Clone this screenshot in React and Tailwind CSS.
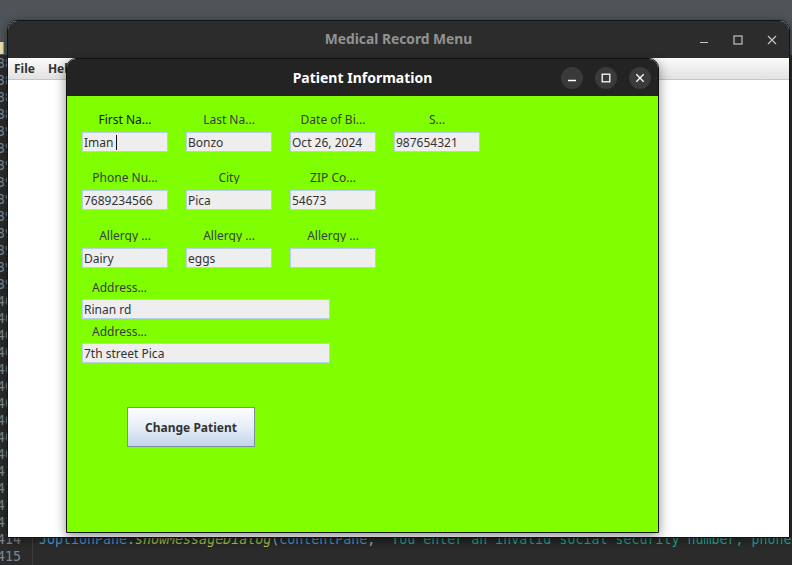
import React from "react";

const lineNums = [];
for (let n = 386; n <= 415; n++) lineNums.push(n);

function Label({ text, dark }) {
  return (
    <div className="h-[20px] flex items-center justify-center">
      <span
        className={`block h-[14px] overflow-hidden leading-[15px] text-[12px] whitespace-nowrap ${
          dark ? "text-[#151515]" : "text-[#3c3c3c]"
        }`}
      >
        {text}
      </span>
    </div>
  );
}

function Field({ value, caret, wide }) {
  return (
    <div
      className={`h-[20px] ${
        wide ? "w-[248px]" : "w-[86px]"
      } bg-[#eeeeee] border border-[#b8cfe5] text-[12px] text-[#333333] pl-[1px] pt-[1px] flex items-center leading-none whitespace-nowrap overflow-hidden`}
    >
      <span>{value}</span>
      {caret && <span className="w-[1px] h-[15px] bg-[#111] ml-[3px]" />}
    </div>
  );
}

function Cell({ label, value, dark, caret, empty }) {
  if (empty) return <div />;
  return (
    <div className="flex flex-col">
      <Label text={label} dark={dark} />
      <div className="mt-[3px]">
        <Field value={value} caret={caret} />
      </div>
    </div>
  );
}

export default function App() {
  const font = { fontFamily: '"Noto Sans", "DejaVu Sans", sans-serif' };
  return (
    <div
      className="relative w-[792px] h-[565px] overflow-hidden bg-[#4f5458] flex flex-col"
      style={font}
    >
      {/* desktop top area */}
      <div className="h-[55px] flex flex-col justify-end">
        <div className="w-[4px] h-[12px] bg-[#efe3b0] border-r border-[#c9a94a] mb-[1px]" />
      </div>

      {/* editor behind */}
      <div
        className="flex-1 bg-[#2b2b2b] flex"
        style={{ fontFamily: '"DejaVu Sans Mono", "Liberation Mono", monospace' }}
      >
        <div className="w-[33px] border-r border-[#3d3d3d] flex flex-col items-end pr-[11px] text-[13.3px] leading-[17px] text-[#7b8792]">
          {lineNums.map((n) => (
            <div key={n} className="h-[17px]">
              {n}
            </div>
          ))}
        </div>
        <div className="flex-1 flex flex-col pl-[6px] text-[13.3px] leading-[17px] whitespace-nowrap overflow-hidden">
          {lineNums.map((n) => (
            <div key={n} className="h-[17px]">
              {n === 414 ? (
                <>
                  <span className="text-[#4a9bd6]">JOptionPane</span>
                  <span className="text-[#b0b0b0]">.</span>
                  <span className="text-[#a9c84a] italic">showMessageDialog</span>
                  <span className="text-[#b0b0b0]">(</span>
                  <span className="text-[#4a9bd6]">contentPane</span>
                  <span className="text-[#b0b0b0]">, </span>
                  <span className="text-[#22a893]">
                    "You enter an invalid social security number, phone number"
                  </span>
                </>
              ) : null}
            </div>
          ))}
        </div>
      </div>

      {/* Main window */}
      <div className="absolute left-[7px] top-[20px] w-[783px] h-[518px] rounded-t-[10px] border border-[#141414] overflow-hidden flex flex-col bg-white shadow-[0_2px_10px_rgba(0,0,0,0.45)]">
        <div className="h-[37px] bg-[#2c2c2c] grid grid-cols-[1fr_auto_1fr] items-center">
          <div />
          <div className="text-[13.8px] font-bold text-[#929292]">
            Medical Record Menu
          </div>
          <div className="flex justify-end h-full">
            <div className="w-[34px] flex items-center justify-center">
              <svg width="10" height="10" viewBox="0 0 10 10">
                <line x1="1" y1="7.5" x2="9" y2="7.5" stroke="#c4c4c4" strokeWidth="1.2" />
              </svg>
            </div>
            <div className="w-[34px] flex items-center justify-center">
              <svg width="10" height="10" viewBox="0 0 10 10">
                <rect x="1" y="1" width="8" height="8" fill="none" stroke="#c4c4c4" strokeWidth="1.2" />
              </svg>
            </div>
            <div className="w-[34px] flex items-center justify-center">
              <svg width="10" height="10" viewBox="0 0 10 10">
                <path d="M1 1 L9 9 M9 1 L1 9" stroke="#c4c4c4" strokeWidth="1.2" />
              </svg>
            </div>
          </div>
        </div>
        <div className="h-[22px] bg-gradient-to-b from-[#fbfbfb] to-[#e2e2e2] border-b border-[#c6c6c6] flex items-center pl-[6px] gap-[13px] text-[12px] font-bold text-[#333]">
          <span>File</span>
          <span>Help</span>
        </div>
        <div className="flex-1 bg-[#ffffff]" />
      </div>

      {/* Patient Information dialog */}
      <div className="absolute left-[66px] top-[58px] w-[593px] h-[475px] rounded-t-[10px] border border-[#111] overflow-hidden flex flex-col shadow-[0_3px_12px_rgba(0,0,0,0.45)]">
        <div className="h-[37px] bg-[#232323] grid grid-cols-[1fr_auto_1fr] items-center">
          <div />
          <div className="text-[14px] font-bold text-white">Patient Information</div>
          <div className="flex justify-end gap-[12px] pr-[7px]">
            <div className="w-[22px] h-[22px] rounded-full bg-[#3a3a3a] flex items-center justify-center">
              <svg width="10" height="10" viewBox="0 0 10 10">
                <line x1="1" y1="7.5" x2="9" y2="7.5" stroke="#ffffff" strokeWidth="1.3" />
              </svg>
            </div>
            <div className="w-[22px] h-[22px] rounded-full bg-[#3a3a3a] flex items-center justify-center">
              <svg width="10" height="10" viewBox="0 0 10 10">
                <rect x="1.2" y="1.2" width="7.6" height="7.6" fill="none" stroke="#ffffff" strokeWidth="1.3" />
              </svg>
            </div>
            <div className="w-[22px] h-[22px] rounded-full bg-[#3a3a3a] flex items-center justify-center">
              <svg width="10" height="10" viewBox="0 0 10 10">
                <path d="M1.3 1.3 L8.7 8.7 M8.7 1.3 L1.3 8.7" stroke="#ffffff" strokeWidth="1.3" />
              </svg>
            </div>
          </div>
        </div>
        <div className="flex-1 bg-[#80ff00] pl-[15px] pt-[13px] flex flex-col">
          <div className="grid grid-cols-[repeat(4,86px)] gap-x-[18px] gap-y-[15px]">
            <Cell label="First Na..." value="Iman" dark caret />
            <Cell label="Last Na..." value="Bonzo" />
            <Cell label="Date of Bi..." value="Oct 26, 2024" />
            <Cell label="S..." value="987654321" />
            <Cell label="Phone Nu..." value="7689234566" />
            <Cell label="City" value="Pica" />
            <Cell label="ZIP Co..." value="54673" />
            <Cell empty />
            <Cell label="Allergy ..." value="Dairy" />
            <Cell label="Allergy ..." value="eggs" />
            <Cell label="Allergy ..." value="" />
            <Cell empty />
          </div>
          <div className="mt-[9px] h-[20px] flex items-center pl-[10px]">
            <span className="block h-[14px] overflow-hidden leading-[15px] text-[12px] text-[#3c3c3c]">
              Address...
            </span>
          </div>
          <div className="mt-[2px]">
            <Field value="Rinan rd" wide />
          </div>
          <div className="mt-[2px] h-[20px] flex items-center pl-[10px]">
            <span className="block h-[14px] overflow-hidden leading-[15px] text-[12px] text-[#3c3c3c]">
              Address...
            </span>
          </div>
          <div className="mt-[2px]">
            <Field value="7th street Pica" wide />
          </div>
          <div className="mt-[44px] ml-[45px] w-[128px] h-[40px] pt-[1px] border border-[#7d8ea3] bg-gradient-to-b from-[#fcfdfe] via-[#e6eef7] to-[#c2d5ea] flex items-center justify-center text-[12px] font-bold text-[#333]">
            Change Patient
          </div>
        </div>
      </div>
    </div>
  );
}
